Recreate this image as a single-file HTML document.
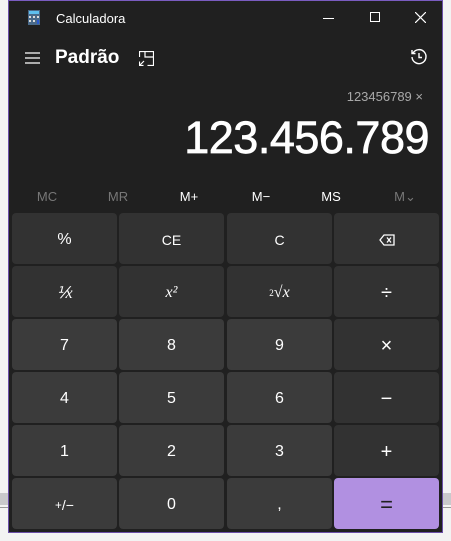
<!DOCTYPE html>
<html><head><meta charset="utf-8"><style>
*{margin:0;padding:0;box-sizing:border-box}
body{width:451px;height:541px;background:#f3f3f3;position:relative;overflow:hidden;font-family:"Liberation Sans",sans-serif}
.band{position:absolute;left:0;top:493px;width:451px;height:12px;background:#c9c9cc}
.line{position:absolute;left:0;top:507px;width:451px;height:1px;background:#999}
.win{position:absolute;left:8px;top:0;width:435px;height:533px;background:#202020;border:1px solid #6b4fa8;border-top:1px solid #7a5cc0}
.t{position:absolute;color:#fff;white-space:nowrap}
.btn{position:absolute;width:105px;height:51px;border-radius:4px;background:#323232;color:#fff;display:flex;align-items:center;justify-content:center;font-size:16px;padding-top:3px}
.n{background:#3b3b3b}
.eq{background:#b190e1;color:#202020;font-size:22px}
.m{position:absolute;top:188px;font-size:13px;color:#fff;width:60px;text-align:center}
.d{color:#777}
</style></head><body>
<div class="band"></div><div class="line"></div>
<div class="win">
<svg style="position:absolute;left:19px;top:9px" width="12" height="15"><rect width="12" height="15" fill="#4a6a8a"/><rect x="1" y="1" width="10" height="3" fill="#5fc0f0"/><g fill="#ddd"><rect x="1" y="6" width="2" height="2"/><rect x="5" y="6" width="2" height="2"/><rect x="9" y="6" width="2" height="2"/><rect x="1" y="10" width="2" height="2"/><rect x="5" y="10" width="2" height="2"/></g><rect x="9" y="10" width="2" height="4" fill="#2a5ad0"/></svg>
<div class="t" style="left:47px;top:10px;font-size:13px">Calculadora</div>
<div style="position:absolute;left:314px;top:17px;width:11px;height:1px;background:#fff"></div>
<div style="position:absolute;left:361px;top:11px;width:10px;height:10px;border:1px solid #fff"></div>
<svg style="position:absolute;left:406px;top:11px" width="11" height="11"><path d="M0 0L11 11M11 0L0 11" stroke="#fff" stroke-width="1.2"/></svg>
<svg style="position:absolute;left:16px;top:51px" width="15" height="12"><path d="M0 1H15M0 6H15M0 11H15" stroke="#fff" stroke-width="1.2"/></svg>
<div class="t" style="left:46px;top:46px;font-size:19px;font-weight:bold">Padrão</div>
<svg style="position:absolute;left:130px;top:50px" width="15" height="15" fill="none" stroke="#fff" stroke-width="1.2"><path d="M0.5 6V0.5H14.5V14.5H8.5M6 0.5V6H14.5M0.5 14.5L5 10M0.5 10.5V14.5H4.5"/></svg>
<svg style="position:absolute;left:401px;top:47px" width="18" height="18" fill="none" stroke="#fff" stroke-width="1.4"><path d="M3 5A7 7 0 1 1 2 9M2 2V5.5H5.5M9 5V9.5H12"/></svg>
<div class="t" style="right:19px;top:88px;font-size:13px;color:#a8a8a8">123456789 ×</div>
<div class="t" style="right:13px;top:111px;font-size:45px;letter-spacing:-0.5px;-webkit-text-stroke:0.7px #fff">123.456.789</div>
<div class="m d" style="left:8px">MC</div>
<div class="m d" style="left:79px">MR</div>
<div class="m" style="left:150px">M+</div>
<div class="m" style="left:222px">M−</div>
<div class="m" style="left:292px">MS</div>
<div class="m d" style="left:366px">M⌄</div>

<div class="btn" style="left:3px;top:212px">%</div>
<div class="btn" style="left:110px;top:212px;font-size:14px">CE</div>
<div class="btn" style="left:218px;top:212px;font-size:14px">C</div>
<div class="btn" style="left:325px;top:212px"><svg width="16" height="12" fill="none" stroke="#fff" stroke-width="1.3"><path d="M5 1H15V11H5L1 6Z M8 3.5L12 8.5M12 3.5L8 8.5"/></svg></div>

<div class="btn" style="left:3px;top:265px;font-family:'Liberation Serif',serif;font-style:italic">⅟x</div>
<div class="btn" style="left:110px;top:265px;font-family:'Liberation Serif',serif;font-style:italic">x²</div>
<div class="btn" style="left:218px;top:265px;font-family:'Liberation Serif',serif"><sup style="font-size:9px">2</sup>√<i>x</i></div>
<div class="btn" style="left:325px;top:265px;font-size:20px">÷</div>

<div class="btn n" style="left:3px;top:318px">7</div>
<div class="btn n" style="left:110px;top:318px">8</div>
<div class="btn n" style="left:218px;top:318px">9</div>
<div class="btn" style="left:325px;top:318px;font-size:20px">×</div>

<div class="btn n" style="left:3px;top:371px">4</div>
<div class="btn n" style="left:110px;top:371px">5</div>
<div class="btn n" style="left:218px;top:371px">6</div>
<div class="btn" style="left:325px;top:371px;font-size:20px">−</div>

<div class="btn n" style="left:3px;top:424px">1</div>
<div class="btn n" style="left:110px;top:424px">2</div>
<div class="btn n" style="left:218px;top:424px">3</div>
<div class="btn" style="left:325px;top:424px;font-size:20px">+</div>

<div class="btn n" style="left:3px;top:477px;font-size:14px"><sup>+</sup>/−</div>
<div class="btn n" style="left:110px;top:477px">0</div>
<div class="btn n" style="left:218px;top:477px">,</div>
<div class="btn eq" style="left:325px;top:477px">=</div>
</div>
</body></html>
